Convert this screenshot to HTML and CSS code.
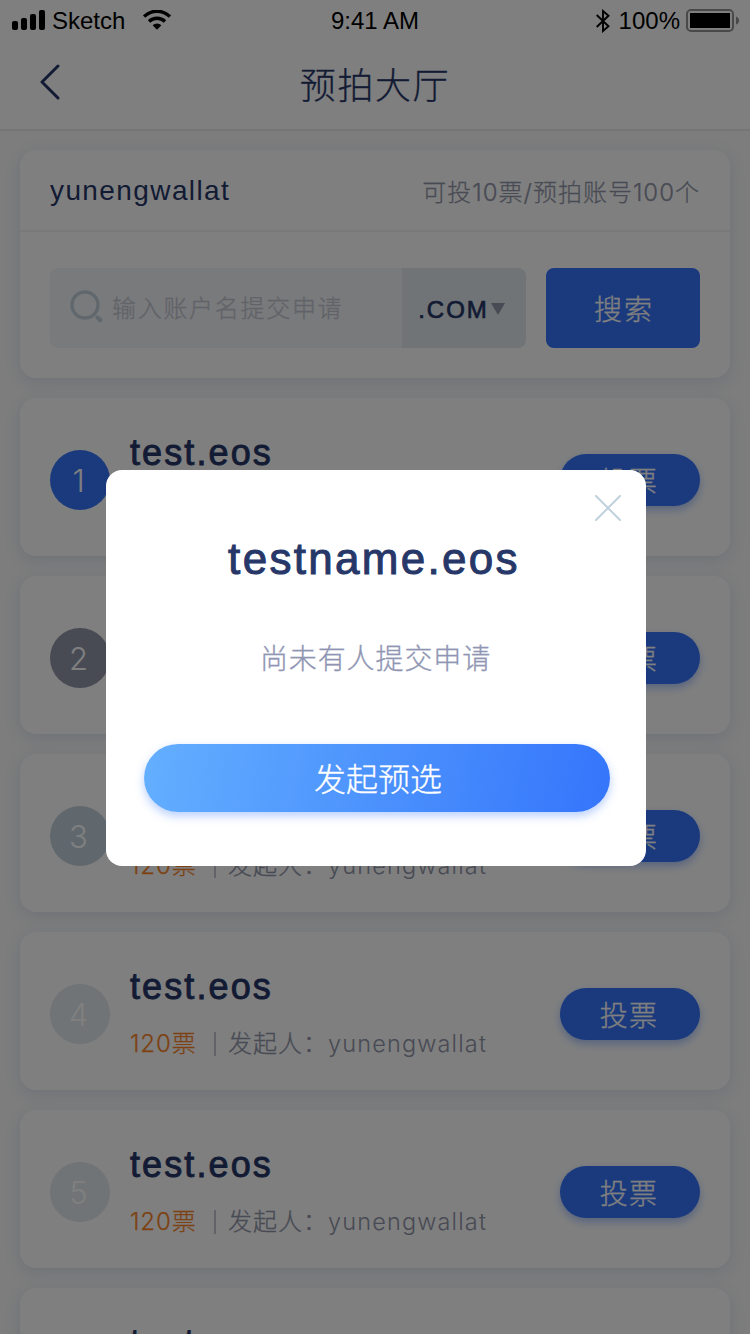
FILE: index.html
```html
<!DOCTYPE html>
<html lang="zh-CN">
<head>
<meta charset="utf-8">
<title>预拍大厅</title>
<link rel="stylesheet" href="styles.css">
</head>
<body>
<div class="screen">
  <header class="header">
    <div class="status">
      <div class="status-left">
        <svg class="signal" width="34" height="20" viewBox="0 0 34 20"><rect x="0" y="11" width="6" height="9" rx="2"/><rect x="9" y="8" width="6" height="12" rx="2"/><rect x="18" y="4" width="6" height="16" rx="2"/><rect x="27" y="0" width="6" height="20" rx="2"/></svg>
        <span class="carrier">Sketch</span>
        <svg class="wifi" width="28" height="20" viewBox="0 0 28 20"><g fill="none" stroke="#000" stroke-width="3.4"><path d="M1.1 6.5a18.4 18.4 0 0 1 25.800 0"/><path d="M6 11.500a11.500 11.500 0 0 1 16 0"/></g><path d="M9.600 15.300a6.600 6.600 0 0 1 8.800 0L14 19.800z"/></svg>
      </div>
      <span class="time">9:41 AM</span>
      <div class="status-right">
        <svg width="14" height="24" viewBox="0 0 14 24" fill="none" stroke="#000" stroke-width="1.9"><path d="M.7 6 12.500 17.300 7 22V2l5.500 4.700L.7 18"/></svg>
        <span class="percent">100%</span>
        <svg class="battery" width="54" height="23" viewBox="0 0 54 23"><rect x="1" y="1" width="46" height="21" rx="4" fill="none" stroke="#929292" stroke-width="2"/><rect x="4" y="4" width="40" height="15"/><path d="M50 7.500q3 1 3 4t-3 4z" fill="#929292"/></svg>
      </div>
    </div>
    <div class="nav">
      <svg class="back" width="22" height="36" viewBox="0 0 22 36" fill="none" stroke="#263768" stroke-width="3" stroke-linecap="round" stroke-linejoin="round"><path d="M19 2 3 18l16 16"/></svg>
      <h1 class="title">预拍大厅</h1>
    </div>
  </header>
  <main class="content">
    <section class="card account">
      <div class="account-head"><span class="account-name">yunengwallat</span><span class="quota">可投10票/预拍账号100个</span></div>
      <div class="search">
        <div class="field">
          <svg width="34" height="34" viewBox="0 0 34 34" fill="none" stroke="#c0d1dc"><circle cx="15" cy="15" r="13" stroke-width="3.400"/><path d="m27.500 27.500 2.800 2.600" stroke-width="4.400" stroke-linecap="round"/></svg>
          <span class="placeholder">输入账户名提交申请</span>
        </div>
        <div class="suffix"><span>.COM</span><svg width="14" height="12" viewBox="0 0 14 12"><path d="M0 0h14L7 12z" fill="#9095a8"/></svg></div>
        <div class="search-btn">搜索</div>
      </div>
    </section>
    <article class="card item"><div class="rank rank-1">1</div><div class="info"><div class="name">test.eos</div><div class="meta"><span class="votes">120票</span><i class="bar"></i><span class="by">发起人：</span><span class="owner">yunengwallat</span></div></div><div class="vote">投票</div></article>
    <article class="card item"><div class="rank rank-2">2</div><div class="info"><div class="name">test.eos</div><div class="meta"><span class="votes">120票</span><i class="bar"></i><span class="by">发起人：</span><span class="owner">yunengwallat</span></div></div><div class="vote">投票</div></article>
    <article class="card item"><div class="rank rank-3">3</div><div class="info"><div class="name">test.eos</div><div class="meta"><span class="votes">120票</span><i class="bar"></i><span class="by">发起人：</span><span class="owner">yunengwallat</span></div></div><div class="vote">投票</div></article>
    <article class="card item"><div class="rank">4</div><div class="info"><div class="name">test.eos</div><div class="meta"><span class="votes">120票</span><i class="bar"></i><span class="by">发起人：</span><span class="owner">yunengwallat</span></div></div><div class="vote">投票</div></article>
    <article class="card item"><div class="rank">5</div><div class="info"><div class="name">test.eos</div><div class="meta"><span class="votes">120票</span><i class="bar"></i><span class="by">发起人：</span><span class="owner">yunengwallat</span></div></div><div class="vote">投票</div></article>
    <article class="card item"><div class="info info-last"><div class="name">test.eos</div></div></article>
  </main>
  <div class="overlay">
    <div class="dialog">
      <svg class="close" width="26" height="26" viewBox="0 0 26 26" fill="none" stroke="#c0d1dc" stroke-width="2" stroke-linecap="round"><path d="m1 1 24 24M25 1 1 25"/></svg>
      <h2 class="dialog-title">testname.eos</h2>
      <p class="dialog-text">尚未有人提交申请</p>
      <div class="dialog-btn">发起预选</div>
    </div>
  </div>
</div>
</body>
</html>
```
FILE: styles.css
```css
* { box-sizing: border-box; margin: 0; padding: 0; }
body { font-family: "Liberation Sans", "Noto Sans CJK SC", sans-serif; font-weight: 300; color: #263768; }
svg { display: block; flex: none; }
.screen { position: relative; width: 750px; height: 1334px; overflow: hidden; background: #fafafa; }
.title, .placeholder, .search-btn, .by, .vote, .dialog-text, .dialog-btn { -webkit-text-stroke: .3px currentColor; }

.header { height: 131px; background: #fff; border-bottom: 2px solid #ebebeb; }
.status { height: 40px; display: grid; grid-template-columns: 1fr auto 1fr; color: #000; font-size: 24px; line-height: 40px; font-weight: 400; }
.status-left { display: flex; align-items: center; padding-left: 12px; }
.signal { margin-top: -1px; }
.carrier { margin-left: 6px; }
.wifi { margin-left: 18px; margin-top: -1px; }
.time { margin-right: 0; }
.status span { padding-top: 1px; }
.status-right { display: flex; align-items: center; justify-content: flex-end; padding-right: 10px; }
.percent { margin-left: 9px; }
.battery { margin-left: 6px; margin-top: 0; }
.nav { height: 88px; display: grid; grid-template-columns: 1fr auto 1fr; align-items: center; }
.back { margin-left: 39px; margin-top: -5px; }
.title { font-size: 36px; font-weight: 300; letter-spacing: 1.6px; line-height: 54px; padding-top: 6px; }

.content { padding: 19px 20px; display: flex; flex-direction: column; gap: 20px; }
.card { flex: none; background: #fff; border-radius: 16px; box-shadow: 0 4px 16px rgba(68, 111, 180, .16); }
.account { height: 228px; }
.account-head { height: 82px; padding: 0 30px; display: flex; justify-content: space-between; align-items: center; border-bottom: 2px solid #f3f3f4; }
.account-name { font-size: 28px; letter-spacing: 1.4px; padding-top: 2px; }
.quota { font-family: Inter, "Noto Sans CJK SC", sans-serif; font-size: 24px; letter-spacing: 1px; color: #9095a8; -webkit-text-stroke: .25px currentColor; }
.search { display: flex; padding: 36px 30px 0; }
.field { width: 352px; height: 80px; display: flex; align-items: center; gap: 8px; padding-left: 20px; background: #f3f5f8; border-radius: 8px 0 0 8px; }
.field svg { margin-top: -2px; }
.placeholder { font-size: 24px; letter-spacing: 1.7px; color: #c3c6d0; padding-bottom: 4px; }
.suffix { width: 124px; display: flex; align-items: center; justify-content: center; gap: 2px; padding-right: 5px; background: #e0e8ec; border-radius: 0 8px 8px 0; font-size: 24px; letter-spacing: 2px; -webkit-text-stroke: .7px currentColor; }
.suffix span { padding-top: 4px; }
.suffix svg { margin-top: 2px; }
.search-btn { width: 154px; height: 80px; margin-left: 20px; display: flex; align-items: center; justify-content: center; background: #3475fb; border-radius: 8px; color: #fff; font-size: 28px; letter-spacing: 2px; padding: 0 0 1px 2px; }

.item { height: 158px; padding: 0 30px; display: flex; align-items: center; }
.rank { width: 60px; height: 60px; margin-top: 6px; border-radius: 50%; background: #e0e8ec; color: #fff; font-family: Inter, sans-serif; font-size: 31px; line-height: 62px; text-align: center; padding-right: 3px; }
.rank-1 { background: #3475fb; }
.rank-2 { background: #9095a8; }
.rank-3 { background: #c0d1dc; }
.info { margin-left: 20px; align-self: flex-start; padding-top: 34px; flex: 1; }
.info-last { margin-left: 80px; }
.name { font-size: 36px; line-height: 42px; letter-spacing: 2.1px; -webkit-text-stroke: .9px currentColor; }
.meta { display: flex; align-items: center; margin-top: 18px; height: 36px; font-family: Inter, "Noto Sans CJK SC", sans-serif; font-size: 24px; line-height: 36px; color: #9095a8; white-space: nowrap; }
.votes { width: 84px; color: #f98428; letter-spacing: .9px; -webkit-text-stroke: .25px currentColor; }
.bar { width: 2px; height: 24px; margin-right: 12px; background: #c3c6d0; }
.by { width: 100px; letter-spacing: 1px; }
.owner { font-size: 23.500px; letter-spacing: 1.15px; }
.vote { width: 140px; height: 52px; margin-top: 6px; display: flex; align-items: center; justify-content: center; border-radius: 26px; background: #3475fb; color: #fff; box-shadow: 0 4px 8px rgba(52, 117, 251, .4); font-size: 28px; letter-spacing: 1.2px; padding: 0 2px 1px 0; }

.overlay { position: absolute; inset: 0; background: rgba(0, 0, 0, .5); padding: 470px 104px 0 106px; }
.dialog { position: relative; height: 396px; padding: 62px 36px 0 38px; background: #fff; border-radius: 16px; text-align: center; }
.close { position: absolute; top: 25px; right: 25px; }
.dialog-title { font-size: 44px; line-height: 54px; font-weight: 400; letter-spacing: 2.3px; -webkit-text-stroke: 1px currentColor; margin-right: 6px; }
.dialog-text { margin-top: 53px; margin-right: 3px; font-size: 28px; line-height: 42px; letter-spacing: .9px; color: #9095b3; }
.dialog-btn { margin-top: 63px; height: 68px; padding: 2px 0 0 2px; border-radius: 34px; background: linear-gradient(100deg, #64afff, #3475fb); box-shadow: 0 4px 10px rgba(52, 117, 251, .35); color: #fff; font-size: 32px; line-height: 68px; }
```
